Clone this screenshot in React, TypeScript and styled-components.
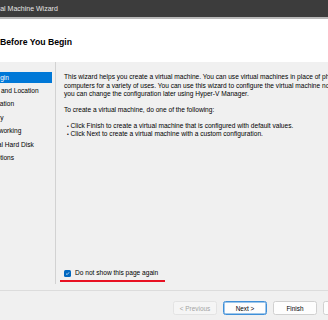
import React from "react";
import styled, { createGlobalStyle } from "styled-components";

const GlobalStyle = createGlobalStyle`
  html, body {
    margin: 0;
    padding: 0;
    background: #f0f0f0;
    overflow: hidden;
  }
  body {
    font-family: "Liberation Sans", Arial, sans-serif;
    color: #000;
  }
`;

// the screenshot is a crop of a wider window, so the window is shifted left
const Viewport = styled.div`
  width: 328px;
  height: 320px;
  overflow: hidden;
  background: #f0f0f0;
`;

const Window = styled.div`
  width: 430px;
  margin-left: -50px;
  display: flex;
  flex-direction: column;
`;

const TitleBar = styled.div`
  height: 17px;
  background: #3c3c3c;
  border-bottom: 2px solid #b8b8b8;
  color: #e6e6e6;
  font-size: 7px;
  line-height: 17px;
  padding-left: 20px;
  white-space: nowrap;
`;

const Header = styled.div`
  height: 43px;
  background: #fff;
  display: flex;
  align-items: center;
  padding: 2px 0 0 50px;
  box-sizing: border-box;
`;

const HeaderTitle = styled.h1`
  margin: 0;
  font-size: 8.7px;
  font-weight: bold;
  white-space: nowrap;
`;

const Body = styled.div`
  height: 222px;
  display: flex;
`;

const Sidebar = styled.ul`
  width: 106px;
  box-sizing: border-box;
  margin: 0;
  padding: 9.7px 3px 0 0;
  list-style: none;
  border-right: 1px solid #d2d2d2;
  display: flex;
  flex-direction: column;
  gap: 2.4px;
`;

const Step = styled.li<{ $active?: boolean }>`
  height: 11px;
  line-height: 11px;
  padding-left: 8px;
  font-size: 6.6px;
  white-space: nowrap;
  background: ${(p) => (p.$active ? "#0078d7" : "transparent")};
  color: ${(p) => (p.$active ? "#fff" : "#000")};
`;

const Content = styled.div`
  flex: 1;
  display: flex;
  flex-direction: column;
  padding: 11px 0 2px 8px;
  font-size: 6.6px;
  line-height: 8.5px;
  white-space: nowrap;
`;

const Paragraph = styled.p`
  margin: 0 0 7.5px;
`;

const BulletList = styled.ul`
  margin: 0;
  padding: 0 0 0 3px;
  list-style: none;
`;

const Bullet = styled.li`
  line-height: 8px;
  &::before {
    content: "•";
    display: inline-block;
    width: 3.5px;
    font-size: 5px;
  }
`;

const CheckRow = styled.label`
  margin-top: auto;
  margin-left: -4px;
  align-self: flex-start;
  display: flex;
  align-items: center;
  gap: 4px;
  height: 11px;
  padding: 0 7px 1px 4px;
  border-bottom: 2px solid #e81123;
  font-size: 6.6px;
`;

const CheckBox = styled.span`
  width: 7px;
  height: 7px;
  border-radius: 1.5px;
  background: #0067c0;
  display: flex;
  align-items: center;
  justify-content: center;
`;

const Footer = styled.div`
  margin-top: 6px;
  border-top: 1px solid #dcdcdc;
  display: flex;
  justify-content: flex-end;
  gap: 6px;
  padding: 10px 13px 0 0;
  height: 29px;
`;

const Button = styled.button<{ $primary?: boolean }>`
  width: 44px;
  height: 14px;
  box-sizing: border-box;
  padding: 0;
  border-radius: 2.5px;
  font-family: "Liberation Sans", Arial, sans-serif;
  font-size: 6.4px;
  color: #000;
  background: #fdfdfd;
  border: 1px solid ${(p) => (p.$primary ? "#3f8fd8" : "#d0d0d0")};
  box-shadow: ${(p) => (p.$primary ? "inset 0 0 0 0.5px #3f8fd8" : "none")};
  &:disabled {
    background: #f5f5f5;
    border-color: #e3e3e3;
    color: #a3a3a3;
  }
`;

const steps = [
  "Before You Begin",
  "Specify Name and Location",
  "Specify Generation",
  "Assign Memory",
  "Configure Networking",
  "Connect Virtual Hard Disk",
  "Installation Options",
];

export default function App() {
  return (
    <Viewport>
      <GlobalStyle />
      <Window>
        <TitleBar>New Virtual Machine Wizard</TitleBar>
        <Header>
          <HeaderTitle>Before You Begin</HeaderTitle>
        </Header>
        <Body>
          <Sidebar>
            {steps.map((s, i) => (
              <Step key={s} $active={i === 0}>
                {s}
              </Step>
            ))}
          </Sidebar>
          <Content>
            <Paragraph>
              This wizard helps you create a virtual machine. You can use virtual machines in place of physical
              <br />
              computers for a variety of uses. You can use this wizard to configure the virtual machine now, and
              <br />
              you can change the configuration later using Hyper-V Manager.
            </Paragraph>
            <Paragraph>To create a virtual machine, do one of the following:</Paragraph>
            <BulletList>
              <Bullet>Click Finish to create a virtual machine that is configured with default values.</Bullet>
              <Bullet>Click Next to create a virtual machine with a custom configuration.</Bullet>
            </BulletList>
            <CheckRow>
              <CheckBox>
                <svg width="5" height="5" viewBox="0 0 10 10">
                  <path d="M2 5.2 L4.2 7.3 L8 2.8" fill="none" stroke="#fff" strokeWidth="1.4" />
                </svg>
              </CheckBox>
              Do not show this page again
            </CheckRow>
          </Content>
        </Body>
        <Footer>
          <Button disabled>&lt; Previous</Button>
          <Button $primary>Next &gt;</Button>
          <Button>Finish</Button>
          <Button>Cancel</Button>
        </Footer>
      </Window>
    </Viewport>
  );
}
